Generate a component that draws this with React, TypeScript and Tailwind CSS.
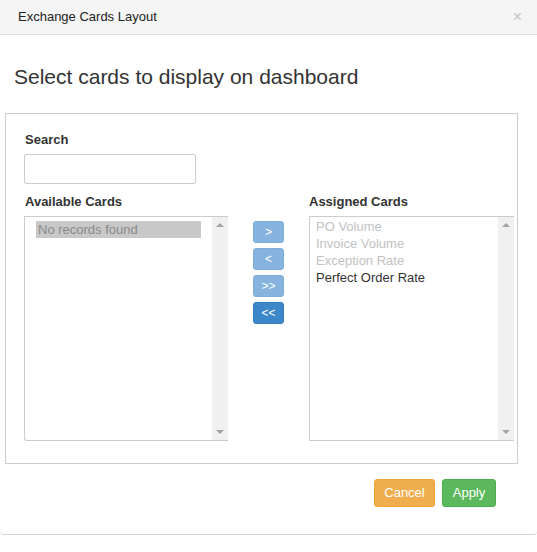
const assigned = [
  { name: 'PO Volume', muted: true },
  { name: 'Invoice Volume', muted: true },
  { name: 'Exception Rate', muted: true },
  { name: 'Perfect Order Rate', muted: false },
]

function ScrollTrack() {
  return (
    <div className="w-[16px] h-full bg-[#f0f0f0] flex flex-col items-center justify-between py-[6px] shrink-0">
      <div className="w-0 h-0 border-l-[4px] border-r-[4px] border-b-[4px] border-l-transparent border-r-transparent border-b-[#a3a3a3]" />
      <div className="w-0 h-0 border-l-[4px] border-r-[4px] border-t-[4px] border-l-transparent border-r-transparent border-t-[#a3a3a3]" />
    </div>
  )
}

function MoveButton({ label, active }: { label: string; active?: boolean }) {
  return (
    <button
      className={`w-[31px] h-[22px] rounded-[3px] text-white text-[12px] leading-none flex items-center justify-center ${
        active ? 'bg-[#3c87c8] border border-[#357ebd]' : 'bg-[#86b4de] border border-[#7eaedb]'
      }`}
    >
      {label}
    </button>
  )
}

export default function App() {
  return (
    <div className="w-[537px] h-[552px] bg-white font-['Liberation_Sans',Arial,sans-serif] text-[#333]">
      <div className="h-[535px] border-b border-[#d4d4d4] rounded-b-[4px] flex flex-col">
        <div className="h-[35px] bg-[#f5f5f5] border-b border-[#dcdcdc] flex items-center justify-between pl-[18px] pr-[15px]">
          <span className="text-[13px] text-[#222]">Exchange Cards Layout</span>
          <span className="text-[#c4c4c4] text-[16px] leading-none">×</span>
        </div>

        <h2 className="text-[21px] text-[#333] leading-none mt-[31px] ml-[14px]">
          Select cards to display on dashboard
        </h2>

        <div className="mx-[5px] mt-[26px] w-[513px] h-[351px] border border-[#cccccc] pl-[18px] pt-[19px]">
          <label className="block text-[13px] font-bold text-[#333] leading-none ml-[1px]">Search</label>
          <input className="block mt-[8px] w-[172px] h-[30px] border border-[#cccccc] rounded-[2px] outline-none" />

          <div className="flex mt-[11px]">
            <div className="w-[204px]">
              <label className="block text-[13px] font-bold leading-none ml-[1px]">Available Cards</label>
              <div className="mt-[8px] h-[225px] border border-[#cccccc] border-r-0 rounded-bl-[3px] flex">
                <div className="flex-1 pt-[4px] pl-[11px] pr-[11px]">
                  <div className="bg-[#c8c8c8] text-[#8a8a8a] text-[13px] leading-[17px] pl-[2px]">
                    No records found
                  </div>
                </div>
                <ScrollTrack />
              </div>
            </div>

            <div className="w-[81px] flex flex-col items-center gap-[5px] pt-[26px]">
              <MoveButton label=">" />
              <MoveButton label="<" />
              <MoveButton label=">>" />
              <MoveButton label="<<" active />
            </div>

            <div className="w-[205px]">
              <label className="block text-[13px] font-bold leading-none">Assigned Cards</label>
              <div className="mt-[8px] h-[225px] border border-[#cccccc] border-r-0 flex">
                <div className="flex-1 pt-[1px] pl-[6px]">
                  {assigned.map((c) => (
                    <div
                      key={c.name}
                      className={`text-[13px] leading-[17px] ${c.muted ? 'text-[#c2c2c2]' : 'text-[#333]'}`}
                    >
                      {c.name}
                    </div>
                  ))}
                </div>
                <ScrollTrack />
              </div>
            </div>
          </div>
        </div>

        <div className="flex justify-end gap-[7px] mt-[15px] pr-[41px]">
          <button className="w-[61px] h-[28px] rounded-[3px] bg-[#f0ad4e] border border-[#eea236] text-white text-[13px]">
            Cancel
          </button>
          <button className="w-[54px] h-[28px] rounded-[3px] bg-[#5cb85c] border border-[#4cae4c] text-white text-[13px]">
            Apply
          </button>
        </div>
      </div>
    </div>
  )
}
